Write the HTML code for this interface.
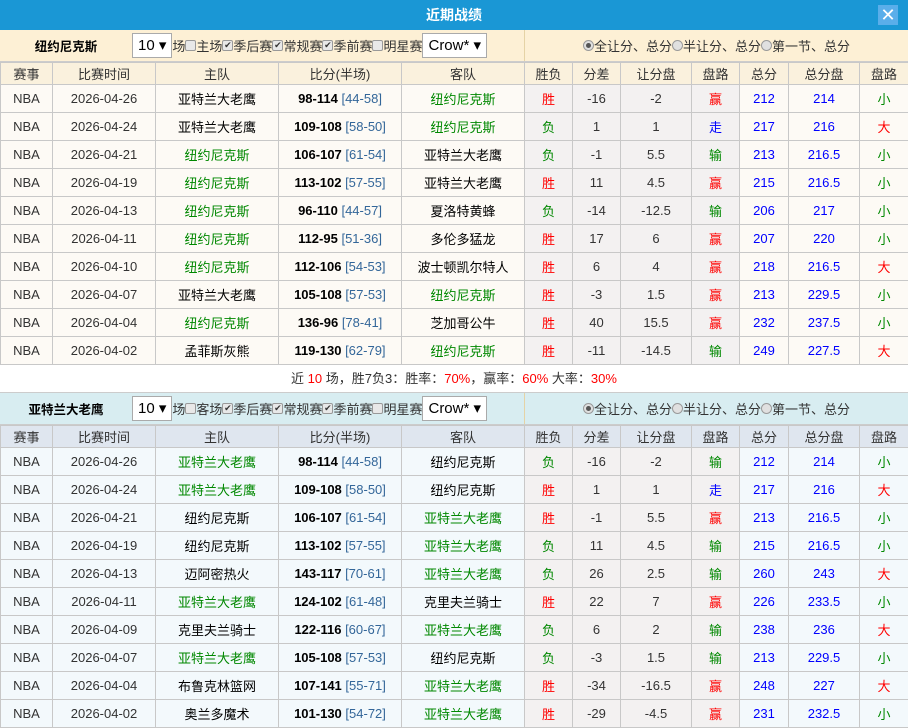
<!DOCTYPE html>
<html><head><meta charset="utf-8"><style>
*{margin:0;padding:0;box-sizing:border-box}
body{width:908px;height:728px;overflow:hidden;background:#fff;font-family:"Liberation Sans","Noto Sans CJK SC",sans-serif;font-size:12.5px;color:#333}
.title{height:30px;background:#1a97d5;color:#fff;font-weight:bold;font-size:14px;text-align:center;line-height:30px;position:relative}
.close{position:absolute;right:10px;top:5px;width:20px;height:20px;background:#5aaeea;color:#fff;font-size:18px;line-height:20px;text-align:center;font-weight:normal}
.bar{height:32px;display:flex;border-bottom:1px solid #ccc}
.bar .l{width:524px;display:flex;align-items:center;font-size:13px;color:#333}
.bar .r{flex:1;display:flex;align-items:center;justify-content:center;border-left:1px solid #e5d3a6;font-size:13px}
.bar b{display:inline-block;width:132px;text-align:center;color:#000;font-size:12.5px}
.sel{display:inline-block;border:1px solid #aaa;background:#fff;height:25px;line-height:23px;padding:0 5px;font-size:15px;color:#000}
.cb{display:inline-block;width:11px;height:11px;border:1px solid #999;border-radius:2px;background:#e8e8e8;vertical-align:-1px;font-size:9px;line-height:9px;text-align:center;color:#333}
.rd{display:inline-block;width:11px;height:11px;border:1px solid #999;border-radius:50%;background:#e0e0e0;vertical-align:-1px;position:relative}
.rd.on:after{content:"";position:absolute;left:2px;top:2px;width:5px;height:5px;border-radius:50%;background:#555}
table{border-collapse:collapse;table-layout:fixed;width:908px}
td,th{border:1px solid #c8c8c8;text-align:center;height:28px;font-weight:normal;white-space:nowrap;overflow:hidden;font-size:13px}
th{height:22px;background:#faf1dd}
.t2 th{background:#dfe6ef}
tr.d td{background:#fdfaf5}
.t2 tr.d td{background:#f3f9fc}
tr.d td.g{background:#f3f1f1}
.sum{height:28px;text-align:center;line-height:28px;border-bottom:1px solid #ccc;font-size:13px}
.red{color:#f00}.grn{color:#080}.blu{color:#00f}.sc{color:#336699}
.bold{font-weight:bold;color:#000}
.bar2{background:#d8edf1}.bar1{background:#fdf0d5}
</style></head><body>
<div class="title">近期战绩<div class="close">✕</div></div>

<div class="bar bar1"><div class="l"><b>纽约尼克斯</b><span class="sel">10 ▾</span>场<span class="cb"></span>主场<span class="cb">✔</span>季后赛<span class="cb">✔</span>常规赛<span class="cb">✔</span>季前赛<span class="cb"></span>明星赛<span class="sel">Crow* ▾</span></div>
<div class="r"><span class="rd on"></span>全让分、总分 <span class="rd"></span>半让分、总分 <span class="rd"></span>第一节、总分</div></div>

<table class="t1">
<colgroup><col style="width:52px"><col style="width:103px"><col style="width:123px"><col style="width:123px"><col style="width:123px"><col style="width:48px"><col style="width:48px"><col style="width:71px"><col style="width:48px"><col style="width:49px"><col style="width:71px"><col style="width:49px"></colgroup>
<tr><th>赛事</th><th>比赛时间</th><th>主队</th><th>比分(半场)</th><th>客队</th><th>胜负</th><th>分差</th><th>让分盘</th><th>盘路</th><th>总分</th><th>总分盘</th><th>盘路</th></tr>
<tr class="d"><td>NBA</td><td>2026-04-26</td><td style="color:#000">亚特兰大老鹰</td><td><span class="bold">98-114</span> <span class="sc">[44-58]</span></td><td class="grn">纽约尼克斯</td><td class="g red">胜</td><td class="g">-16</td><td class="g">-2</td><td class="g red">赢</td><td class="blu">212</td><td class="blu">214</td><td class="grn">小</td></tr>
<tr class="d"><td>NBA</td><td>2026-04-24</td><td style="color:#000">亚特兰大老鹰</td><td><span class="bold">109-108</span> <span class="sc">[58-50]</span></td><td class="grn">纽约尼克斯</td><td class="g grn">负</td><td class="g">1</td><td class="g">1</td><td class="g blu">走</td><td class="blu">217</td><td class="blu">216</td><td class="red">大</td></tr>
<tr class="d"><td>NBA</td><td>2026-04-21</td><td class="grn">纽约尼克斯</td><td><span class="bold">106-107</span> <span class="sc">[61-54]</span></td><td style="color:#000">亚特兰大老鹰</td><td class="g grn">负</td><td class="g">-1</td><td class="g">5.5</td><td class="g grn">输</td><td class="blu">213</td><td class="blu">216.5</td><td class="grn">小</td></tr>
<tr class="d"><td>NBA</td><td>2026-04-19</td><td class="grn">纽约尼克斯</td><td><span class="bold">113-102</span> <span class="sc">[57-55]</span></td><td style="color:#000">亚特兰大老鹰</td><td class="g red">胜</td><td class="g">11</td><td class="g">4.5</td><td class="g red">赢</td><td class="blu">215</td><td class="blu">216.5</td><td class="grn">小</td></tr>
<tr class="d"><td>NBA</td><td>2026-04-13</td><td class="grn">纽约尼克斯</td><td><span class="bold">96-110</span> <span class="sc">[44-57]</span></td><td style="color:#000">夏洛特黄蜂</td><td class="g grn">负</td><td class="g">-14</td><td class="g">-12.5</td><td class="g grn">输</td><td class="blu">206</td><td class="blu">217</td><td class="grn">小</td></tr>
<tr class="d"><td>NBA</td><td>2026-04-11</td><td class="grn">纽约尼克斯</td><td><span class="bold">112-95</span> <span class="sc">[51-36]</span></td><td style="color:#000">多伦多猛龙</td><td class="g red">胜</td><td class="g">17</td><td class="g">6</td><td class="g red">赢</td><td class="blu">207</td><td class="blu">220</td><td class="grn">小</td></tr>
<tr class="d"><td>NBA</td><td>2026-04-10</td><td class="grn">纽约尼克斯</td><td><span class="bold">112-106</span> <span class="sc">[54-53]</span></td><td style="color:#000">波士顿凯尔特人</td><td class="g red">胜</td><td class="g">6</td><td class="g">4</td><td class="g red">赢</td><td class="blu">218</td><td class="blu">216.5</td><td class="red">大</td></tr>
<tr class="d"><td>NBA</td><td>2026-04-07</td><td style="color:#000">亚特兰大老鹰</td><td><span class="bold">105-108</span> <span class="sc">[57-53]</span></td><td class="grn">纽约尼克斯</td><td class="g red">胜</td><td class="g">-3</td><td class="g">1.5</td><td class="g red">赢</td><td class="blu">213</td><td class="blu">229.5</td><td class="grn">小</td></tr>
<tr class="d"><td>NBA</td><td>2026-04-04</td><td class="grn">纽约尼克斯</td><td><span class="bold">136-96</span> <span class="sc">[78-41]</span></td><td style="color:#000">芝加哥公牛</td><td class="g red">胜</td><td class="g">40</td><td class="g">15.5</td><td class="g red">赢</td><td class="blu">232</td><td class="blu">237.5</td><td class="grn">小</td></tr>
<tr class="d"><td>NBA</td><td>2026-04-02</td><td style="color:#000">孟菲斯灰熊</td><td><span class="bold">119-130</span> <span class="sc">[62-79]</span></td><td class="grn">纽约尼克斯</td><td class="g red">胜</td><td class="g">-11</td><td class="g">-14.5</td><td class="g grn">输</td><td class="blu">249</td><td class="blu">227.5</td><td class="red">大</td></tr>
</table>
<div class="sum">近 <span class="red">10</span> 场，胜7负3：胜率：<span class="red">70%</span>，赢率：<span class="red">60%</span> 大率：<span class="red">30%</span></div>

<div class="bar bar2"><div class="l"><b>亚特兰大老鹰</b><span class="sel">10 ▾</span>场<span class="cb"></span>客场<span class="cb">✔</span>季后赛<span class="cb">✔</span>常规赛<span class="cb">✔</span>季前赛<span class="cb"></span>明星赛<span class="sel">Crow* ▾</span></div>
<div class="r" style="border-left-color:#e5d3a6"><span class="rd on"></span>全让分、总分 <span class="rd"></span>半让分、总分 <span class="rd"></span>第一节、总分</div></div>

<table class="t2">
<colgroup><col style="width:52px"><col style="width:103px"><col style="width:123px"><col style="width:123px"><col style="width:123px"><col style="width:48px"><col style="width:48px"><col style="width:71px"><col style="width:48px"><col style="width:49px"><col style="width:71px"><col style="width:49px"></colgroup>
<tr><th>赛事</th><th>比赛时间</th><th>主队</th><th>比分(半场)</th><th>客队</th><th>胜负</th><th>分差</th><th>让分盘</th><th>盘路</th><th>总分</th><th>总分盘</th><th>盘路</th></tr>
<tr class="d"><td>NBA</td><td>2026-04-26</td><td class="grn">亚特兰大老鹰</td><td><span class="bold">98-114</span> <span class="sc">[44-58]</span></td><td style="color:#000">纽约尼克斯</td><td class="g grn">负</td><td class="g">-16</td><td class="g">-2</td><td class="g grn">输</td><td class="blu">212</td><td class="blu">214</td><td class="grn">小</td></tr>
<tr class="d"><td>NBA</td><td>2026-04-24</td><td class="grn">亚特兰大老鹰</td><td><span class="bold">109-108</span> <span class="sc">[58-50]</span></td><td style="color:#000">纽约尼克斯</td><td class="g red">胜</td><td class="g">1</td><td class="g">1</td><td class="g blu">走</td><td class="blu">217</td><td class="blu">216</td><td class="red">大</td></tr>
<tr class="d"><td>NBA</td><td>2026-04-21</td><td style="color:#000">纽约尼克斯</td><td><span class="bold">106-107</span> <span class="sc">[61-54]</span></td><td class="grn">亚特兰大老鹰</td><td class="g red">胜</td><td class="g">-1</td><td class="g">5.5</td><td class="g red">赢</td><td class="blu">213</td><td class="blu">216.5</td><td class="grn">小</td></tr>
<tr class="d"><td>NBA</td><td>2026-04-19</td><td style="color:#000">纽约尼克斯</td><td><span class="bold">113-102</span> <span class="sc">[57-55]</span></td><td class="grn">亚特兰大老鹰</td><td class="g grn">负</td><td class="g">11</td><td class="g">4.5</td><td class="g grn">输</td><td class="blu">215</td><td class="blu">216.5</td><td class="grn">小</td></tr>
<tr class="d"><td>NBA</td><td>2026-04-13</td><td style="color:#000">迈阿密热火</td><td><span class="bold">143-117</span> <span class="sc">[70-61]</span></td><td class="grn">亚特兰大老鹰</td><td class="g grn">负</td><td class="g">26</td><td class="g">2.5</td><td class="g grn">输</td><td class="blu">260</td><td class="blu">243</td><td class="red">大</td></tr>
<tr class="d"><td>NBA</td><td>2026-04-11</td><td class="grn">亚特兰大老鹰</td><td><span class="bold">124-102</span> <span class="sc">[61-48]</span></td><td style="color:#000">克里夫兰骑士</td><td class="g red">胜</td><td class="g">22</td><td class="g">7</td><td class="g red">赢</td><td class="blu">226</td><td class="blu">233.5</td><td class="grn">小</td></tr>
<tr class="d"><td>NBA</td><td>2026-04-09</td><td style="color:#000">克里夫兰骑士</td><td><span class="bold">122-116</span> <span class="sc">[60-67]</span></td><td class="grn">亚特兰大老鹰</td><td class="g grn">负</td><td class="g">6</td><td class="g">2</td><td class="g grn">输</td><td class="blu">238</td><td class="blu">236</td><td class="red">大</td></tr>
<tr class="d"><td>NBA</td><td>2026-04-07</td><td class="grn">亚特兰大老鹰</td><td><span class="bold">105-108</span> <span class="sc">[57-53]</span></td><td style="color:#000">纽约尼克斯</td><td class="g grn">负</td><td class="g">-3</td><td class="g">1.5</td><td class="g grn">输</td><td class="blu">213</td><td class="blu">229.5</td><td class="grn">小</td></tr>
<tr class="d"><td>NBA</td><td>2026-04-04</td><td style="color:#000">布鲁克林篮网</td><td><span class="bold">107-141</span> <span class="sc">[55-71]</span></td><td class="grn">亚特兰大老鹰</td><td class="g red">胜</td><td class="g">-34</td><td class="g">-16.5</td><td class="g red">赢</td><td class="blu">248</td><td class="blu">227</td><td class="red">大</td></tr>
<tr class="d"><td>NBA</td><td>2026-04-02</td><td style="color:#000">奥兰多魔术</td><td><span class="bold">101-130</span> <span class="sc">[54-72]</span></td><td class="grn">亚特兰大老鹰</td><td class="g red">胜</td><td class="g">-29</td><td class="g">-4.5</td><td class="g red">赢</td><td class="blu">231</td><td class="blu">232.5</td><td class="grn">小</td></tr>
</table>
</body></html>
